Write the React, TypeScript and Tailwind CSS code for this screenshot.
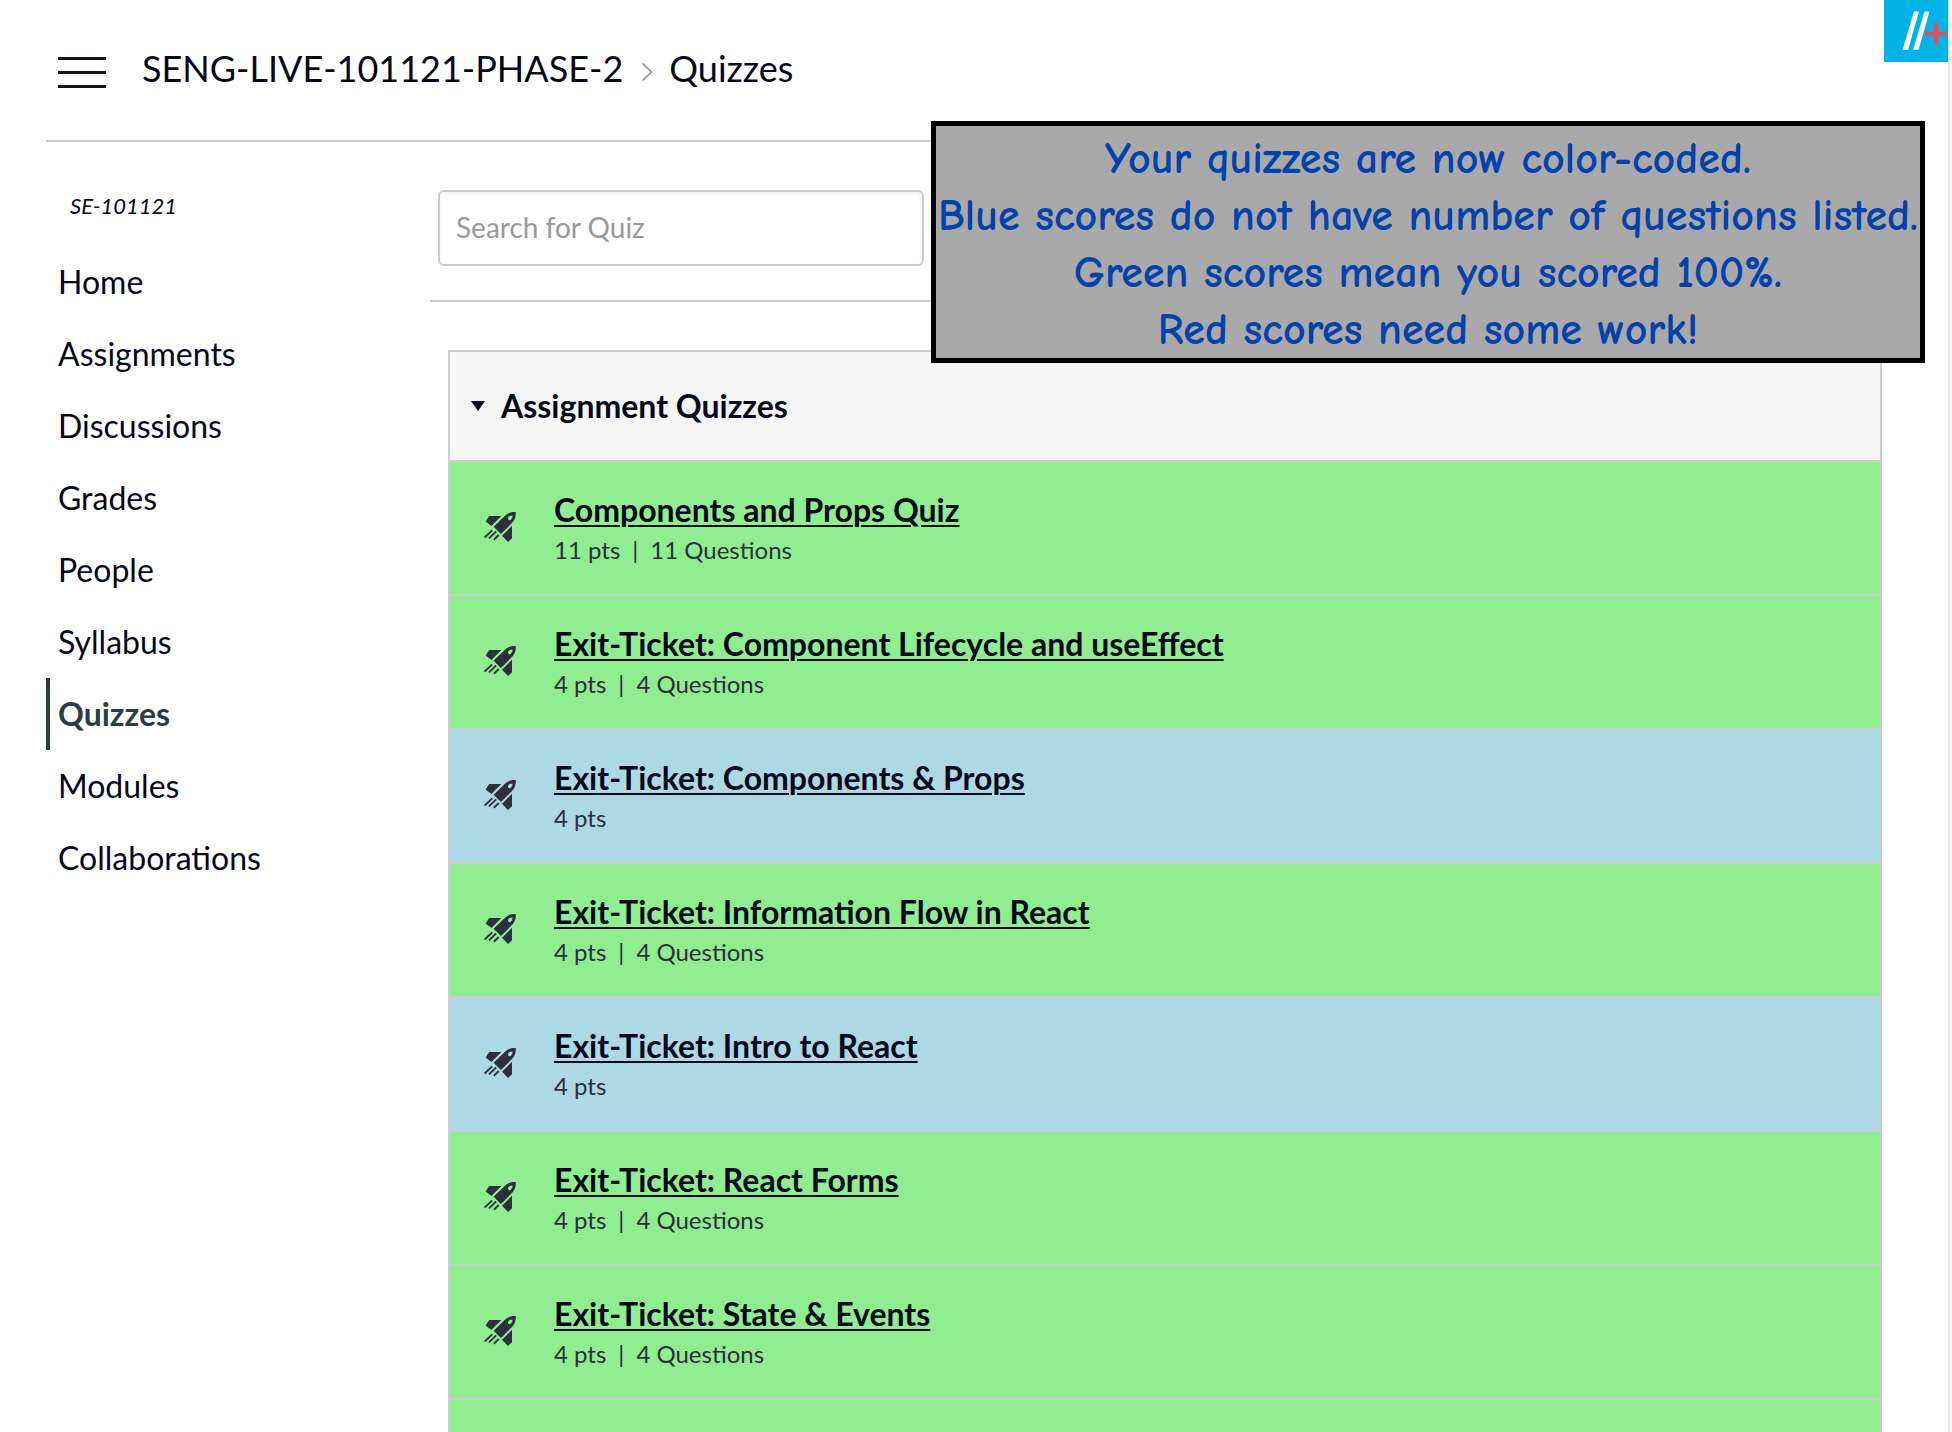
const navItems = [
  'Home',
  'Assignments',
  'Discussions',
  'Grades',
  'People',
  'Syllabus',
  'Quizzes',
  'Modules',
  'Collaborations',
];

type Quiz = { title: string; points: number; questions?: number };

const quizzes: Quiz[] = [
  { title: 'Components and Props Quiz', points: 11, questions: 11 },
  { title: 'Exit-Ticket: Component Lifecycle and useEffect', points: 4, questions: 4 },
  { title: 'Exit-Ticket: Components & Props', points: 4 },
  { title: 'Exit-Ticket: Information Flow in React', points: 4, questions: 4 },
  { title: 'Exit-Ticket: Intro to React', points: 4 },
  { title: 'Exit-Ticket: React Forms', points: 4, questions: 4 },
  { title: 'Exit-Ticket: State & Events', points: 4, questions: 4 },
];

function RocketIcon() {
  return (
    <svg viewBox="0 0 32 32" className="mb-0.5 size-8 shrink-0 text-[#2d2f3e]" aria-hidden="true">
      <path d="M5.2 5H17.4L7.4 14.9L1.6 10.6Z" fill="currentColor" />
      <path
        fillRule="evenodd"
        d="M9.6 15.8L21.3 4.4C24.5 1.6 28 .8 31.8 1C32 5 31 8.7 28.4 11.5L17 23ZM28.6 4.6C26.5 4.6 24.4 5.4 24 7C23.8 8.8 25.2 9.6 26.4 9C27.8 8.2 28.6 6.4 28.6 4.6Z"
        fill="currentColor"
      />
      <path d="M28 14.8V27.2L24 31L18 24.8Z" fill="currentColor" />
      <path
        d="M.6 26.6L8.2 19.4M5 27.4L12.2 20.4M9.8 28.8L14.8 24"
        stroke="currentColor"
        strokeWidth="1.9"
      />
    </svg>
  );
}

function Header() {
  return (
    <header className="ml-[46px] mr-[68px] flex h-[142px] items-center border-b-2 border-[#c7cdd1] pt-1 pl-3">
      <button type="button" aria-label="Toggle course navigation" className="flex w-12 flex-col gap-[11px]">
        <span className="h-[3px] bg-[#10131f]" />
        <span className="h-[3px] bg-[#10131f]" />
        <span className="h-[3px] bg-[#10131f]" />
      </button>
      <nav aria-label="Breadcrumb" className="ml-9 flex items-center pb-2 text-4xl text-[#05071a]">
        <a href="#course">SENG-LIVE-101121-PHASE-2</a>
        <svg viewBox="0 0 12 20" className="mt-2 mr-4 ml-[18px] h-5 w-3" fill="none" aria-hidden="true">
          <path d="M1.5 1.5L10.5 10L1.5 18.5" stroke="#8b8f94" strokeWidth="1.6" />
        </svg>
        <span>Quizzes</span>
      </nav>
    </header>
  );
}

function CourseNav() {
  return (
    <nav aria-label="Course" className="w-96 shrink-0 pt-12">
      <p className="mb-6 pl-6 text-[22px] leading-8 text-[#05071a] italic">SE-101121</p>
      <ul>
        {navItems.map((item) => (
          <li key={item}>
            <a
              href={`#${item.toLowerCase()}`}
              className={
                item === 'Quizzes'
                  ? 'flex h-[72px] items-center border-l-4 border-[#2d3b45] pl-2 text-[32px] font-bold text-[#2d3b45]'
                  : 'flex h-[72px] items-center border-l-4 border-transparent pl-2 text-[32px] text-[#05071a]'
              }
            >
              {item}
            </a>
          </li>
        ))}
      </ul>
    </nav>
  );
}

function QuizRow({ quiz }: { quiz: Quiz }) {
  return (
    <li
      className={
        quiz.questions
          ? 'flex h-[134px] items-center border-b-2 border-[#c7cdd1] bg-[#90ee90] pl-[34px]'
          : 'flex h-[134px] items-center border-b-2 border-[#c7cdd1] bg-[#add8e6] pl-[34px]'
      }
    >
      <RocketIcon />
      <div className="ml-[38px] pt-1">
        <a
          href="#quiz"
          className="block text-[32px] leading-10 font-bold text-[#05071a] underline decoration-2 underline-offset-[3px]"
        >
          {quiz.title}
        </a>
        <p className="flex gap-3 text-2xl leading-10 text-[#2d2f3e]">
          <span>{quiz.points} pts</span>
          {quiz.questions && (
            <>
              <span>|</span>
              <span>{quiz.questions} Questions</span>
            </>
          )}
        </p>
      </div>
    </li>
  );
}

function Notice() {
  return (
    <aside className="absolute top-[121px] right-[25px] border-5 border-black bg-[#a9a9a9] px-0.5 pt-1 text-center font-['Comic_Sans_MS','Comic_Neue','Open_Sans',sans-serif] text-[44px] leading-[57px] font-bold whitespace-nowrap text-[#0242ad]">
      <p>Your quizzes are now color-coded.</p>
      <p>Blue scores do not have number of questions listed.</p>
      <p>Green scores mean you scored 100%.</p>
      <p>Red scores need some work!</p>
    </aside>
  );
}

function ExtensionBadge() {
  return (
    <button
      type="button"
      aria-label="Open extension"
      className="absolute top-0 right-0.5 h-[62px] w-16 bg-[#02b3e8]"
    >
      <svg viewBox="0 0 64 62" className="size-full" fill="none" aria-hidden="true">
        <path d="M30 11.5H35L24 50H18.5Z" fill="#fff" />
        <path d="M40.5 11.5H45.5L34.5 50H29Z" fill="#fff" />
        <path d="M40.5 33.5H63M52 22.5V44.5" stroke="#e8504f" strokeWidth="4" />
      </svg>
    </button>
  );
}

export default function App() {
  return (
    <div className="relative flex min-h-screen flex-col border-r-2 border-[#f8f8f8] bg-white font-[Lato,sans-serif]">
      <div className="flex flex-1 flex-col border-r-2 border-[#e8e8e8]">
        <Header />
        <div className="ml-[46px] flex flex-1">
          <CourseNav />
          <main className="mr-[66px] flex flex-1 flex-col">
            <div className="border-b-2 border-[#c7cdd1] px-2 pt-12 pb-[34px]">
              <input
                type="search"
                aria-label="Search for Quiz"
                placeholder="Search for Quiz"
                className="block h-[76px] w-[486px] rounded-md border-2 border-[#cccccc] px-4 pb-0.5 text-[28px] inset-shadow-sm placeholder:text-[#999999]"
              />
            </div>
            <section className="mt-12 ml-[18px] flex flex-1 flex-col border-2 border-b-0 border-[#c7cdd1]">
              <h2 className="border-b-2 border-[#c7cdd1] bg-[#f5f5f5]">
                <button
                  type="button"
                  aria-expanded="true"
                  className="flex h-[108px] w-full items-center gap-4 pl-[21px] text-[32px] font-bold text-[#05071a]"
                >
                  <svg viewBox="0 0 14 10" className="h-[10px] w-[14px]" aria-hidden="true">
                    <path d="M0 0H14L7 10Z" fill="currentColor" />
                  </svg>
                  Assignment Quizzes
                </button>
              </h2>
              <ul className="flex flex-1 flex-col">
                {quizzes.map((quiz) => (
                  <QuizRow key={quiz.title} quiz={quiz} />
                ))}
                <li className="flex-1 bg-[#90ee90]" />
              </ul>
            </section>
          </main>
        </div>
      </div>
      <Notice />
      <ExtensionBadge />
    </div>
  );
}
